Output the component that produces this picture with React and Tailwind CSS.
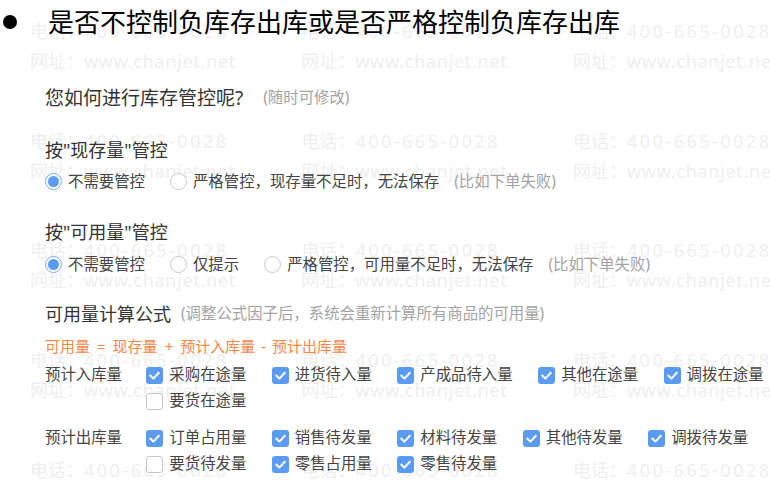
import React from "react";

const cols = [30, 301.5, 573];
const rows = [16, 125.7, 235.4, 345.1, 454.8];

function Watermark() {
    return (
        <div className="absolute inset-0 pointer-events-none select-none">
            {rows.map((top) =>
                cols.map((left) => (
                    <div
                        key={`${left}-${top}`}
                        className="absolute text-[18px] leading-[30px] text-[#efefef] whitespace-nowrap font-['Noto_Sans','Noto_Sans_CJK_SC',sans-serif]"
                        style={{ left, top }}
                    >
                        <div>
                            电话：<span className="tracking-[2.5px]">400-665-0028</span>
                        </div>
                        <div>
                            网址：<span className="tracking-[0.7px]">www.chanjet.net</span>
                        </div>
                    </div>
                ))
            )}
        </div>
    );
}

function Radio({ checked, label, note }) {
    return (
        <div className="flex items-center">
            {checked ? (
                <span className="w-[17px] h-[17px] rounded-full border border-[#7aaef5] bg-white flex items-center justify-center">
                    <span className="w-[11px] h-[11px] rounded-full bg-[#5b9cf2]" />
                </span>
            ) : (
                <span className="w-[17px] h-[17px] rounded-full border border-[#c9c9c9] bg-white" />
            )}
            <span className="ml-[6px] text-[15.4px] text-[#444]">{label}</span>
            {note && <span className="ml-[15px] text-[15.4px] text-[#a3a3a3]">{note}</span>}
        </div>
    );
}

function Check({ checked, label }) {
    return (
        <div className="flex items-center h-[26px]">
            {checked ? (
                <span className="w-[17px] h-[17px] rounded-[3px] bg-[#5b9cf2] flex items-center justify-center">
                    <svg width="17" height="17" viewBox="0 0 17 17">
                        <polyline
                            points="4.2,8.6 7.4,11.6 12.8,5.8"
                            fill="none"
                            stroke="white"
                            strokeWidth="2"
                            strokeLinecap="round"
                            strokeLinejoin="round"
                        />
                    </svg>
                </span>
            ) : (
                <span className="w-[17px] h-[17px] rounded-[3px] border border-[#c6c6c6] bg-white" />
            )}
            <span className="ml-[6px] text-[15.4px] text-[#444]">{label}</span>
        </div>
    );
}

function Group({ title, items }) {
    return (
        <div className="flex">
            <div className="w-[104px] h-[26px] flex items-center text-[15.4px] text-[#444]">{title}</div>
            <div className="w-[640px] flex flex-wrap gap-x-[25.5px]">
                {items.map((it) => (
                    <Check key={it.label} checked={it.checked} label={it.label} />
                ))}
            </div>
        </div>
    );
}

export default function App() {
    const inItems = [
        { label: "采购在途量", checked: true },
        { label: "进货待入量", checked: true },
        { label: "产成品待入量", checked: true },
        { label: "其他在途量", checked: true },
        { label: "调拨在途量", checked: true },
        { label: "要货在途量", checked: false },
    ];
    const outItems = [
        { label: "订单占用量", checked: true },
        { label: "销售待发量", checked: true },
        { label: "材料待发量", checked: true },
        { label: "其他待发量", checked: true },
        { label: "调拨待发量", checked: true },
        { label: "要货待发量", checked: false },
        { label: "零售占用量", checked: true },
        { label: "零售待发量", checked: true },
    ];

    return (
        <div className="relative w-[770px] h-[480px] overflow-hidden bg-white font-['Noto_Sans','Noto_Sans_CJK_SC',sans-serif]">
            <Watermark />
            <div className="relative flex flex-col">
                {/* 标题 */}
                <div className="h-[44px] flex items-center">
                    <span className="ml-[3px] w-[14px] h-[14px] rounded-full bg-black" />
                    <span className="ml-[31px] text-[26px] text-black">是否不控制负库存出库或是否严格控制负库存出库</span>
                </div>

                <div className="pl-[45px] flex flex-col">
                    <div className="mt-[40px] h-[28px] flex items-center">
                        <span className="text-[19px] text-[#333]">您如何进行库存管控呢?</span>
                        <span className="ml-[20px] text-[15.4px] text-[#a3a3a3]">(随时可修改)</span>
                    </div>

                    <div className="mt-[24px] h-[28px] flex items-center text-[18px] text-[#333]">
                        {'按"现存量"管控'}
                    </div>
                    <div className="mt-[6px] h-[24px] flex items-center gap-x-[25px]">
                        <Radio checked label="不需要管控" />
                        <Radio label="严格管控，现存量不足时，无法保存" note="(比如下单失败)" />
                    </div>

                    <div className="mt-[24px] h-[28px] flex items-center text-[18px] text-[#333]">
                        {'按"可用量"管控'}
                    </div>
                    <div className="mt-[7px] h-[24px] flex items-center gap-x-[25px]">
                        <Radio checked label="不需要管控" />
                        <Radio label="仅提示" />
                        <Radio label="严格管控，可用量不足时，无法保存" note="(比如下单失败)" />
                    </div>

                    <div className="mt-[23px] h-[28px] flex items-center">
                        <span className="text-[18px] text-[#333]">可用量计算公式</span>
                        <span className="ml-[10px] text-[15.4px] text-[#a3a3a3]">
                            (调整公式因子后，系统会重新计算所有商品的可用量)
                        </span>
                    </div>

                    <div className="mt-[7px] h-[22px] flex items-center text-[15px] text-[#f5874a]">
                        可用量<span className="mx-[7px]">=</span>现存量<span className="mx-[7px]">+</span>预计入库量
                        <span className="mx-[6px]">-</span>预计出库量
                    </div>

                    <div className="mt-[5px]">
                        <Group title="预计入库量" items={inItems} />
                    </div>
                    <div className="mt-[11px]">
                        <Group title="预计出库量" items={outItems} />
                    </div>
                </div>
            </div>
        </div>
    );
}
